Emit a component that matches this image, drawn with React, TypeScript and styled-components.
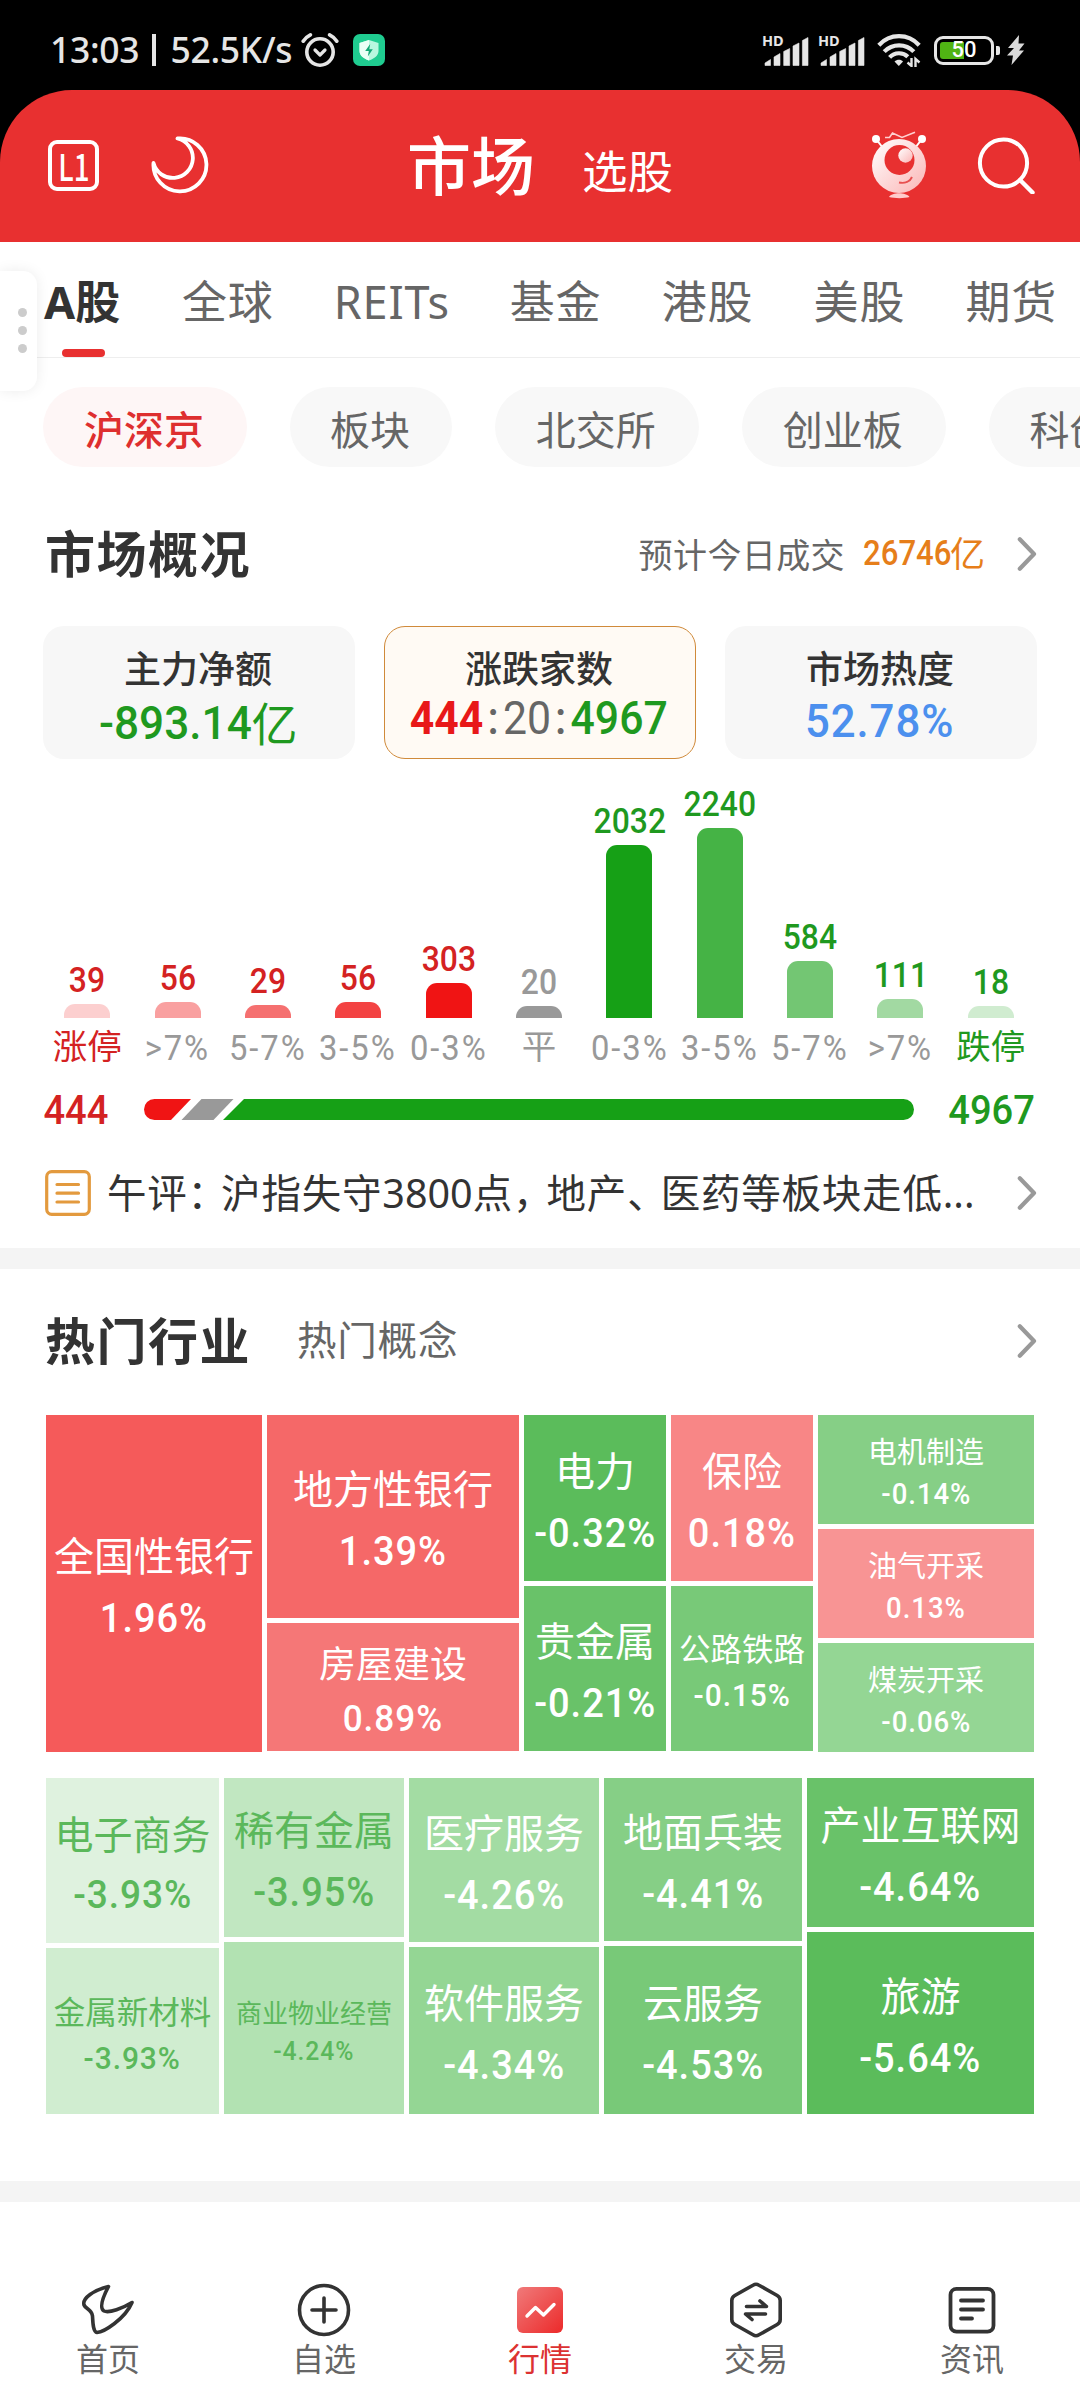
import React from "react";
import styled, {createGlobalStyle, ThemeProvider} from "styled-components";

const theme = {
    colors: {
        primary: "#333333",
        secondary: "#666666",
        muted: "#999999",
        brand: "#e83030",
        up: "#d42222",
        upStrong: "#f01414",
        down: "#1f991f",
        downStrong: "#16a016",
        orange: "#e67e1a",
        divider: "#f4f4f4",
    },
};

const cjk = `"Noto Sans CJK SC", sans-serif`;
const latin = `"Noto Sans", "Noto Sans CJK SC", sans-serif`;
const digits = `Roboto, "Noto Sans CJK SC", sans-serif`;

const bars = [
    {value: "39", label: "涨停", height: 14, color: "#fccfcf", tone: "up"},
    {value: "56", label: ">7%", height: 16, color: "#f9a0a0", tone: "up"},
    {value: "29", label: "5-7%", height: 13, color: "#f57070", tone: "up"},
    {value: "56", label: "3-5%", height: 16, color: "#f34343", tone: "up"},
    {value: "303", label: "0-3%", height: 35, color: "#f01414", tone: "up"},
    {value: "20", label: "平", height: 12, color: "#999999", tone: "muted"},
    {value: "2032", label: "0-3%", height: 173, color: "#16a016", tone: "down"},
    {value: "2240", label: "3-5%", height: 190, color: "#45b345", tone: "down"},
    {value: "584", label: "5-7%", height: 57, color: "#73c673", tone: "down"},
    {value: "111", label: ">7%", height: 19, color: "#a2d9a2", tone: "down"},
    {value: "18", label: "跌停", height: 12, color: "#d0ecd0", tone: "down"},
];

type Cell = { name: string; pct: string; h: number; bg: string; size?: number; green?: boolean };
type Column = { w: number; cells: Cell[] };

const risers: Column[] = [
    {w: 216, cells: [{name: "全国性银行", pct: "1.96%", h: 337, bg: "#f55a5a"}]},
    {
        w: 252, cells: [
            {name: "地方性银行", pct: "1.39%", h: 203, bg: "#f56868"},
            {name: "房屋建设", pct: "0.89%", h: 128, bg: "#f57777", size: 37},
        ]
    },
    {
        w: 142, cells: [
            {name: "电力", pct: "-0.32%", h: 166, bg: "#5bbc5b"},
            {name: "贵金属", pct: "-0.21%", h: 165, bg: "#69c269"},
        ]
    },
    {
        w: 142, cells: [
            {name: "保险", pct: "0.18%", h: 166, bg: "#f88686"},
            {name: "公路铁路", pct: "-0.15%", h: 165, bg: "#78c978", size: 31.5},
        ]
    },
    {
        w: 216, cells: [
            {name: "电机制造", pct: "-0.14%", h: 109, bg: "#86cf86", size: 29},
            {name: "油气开采", pct: "0.13%", h: 109, bg: "#f89494", size: 29},
            {name: "煤炭开采", pct: "-0.06%", h: 109, bg: "#94d694", size: 29},
        ]
    },
];

const fallers: Column[] = [
    {
        w: 173, cells: [
            {name: "电子商务", pct: "-3.93%", h: 165, bg: "#dff2df", size: 39, green: true},
            {name: "金属新材料", pct: "-3.93%", h: 166, bg: "#d0edd0", size: 31.5, green: true},
        ]
    },
    {
        w: 180, cells: [
            {name: "稀有金属", pct: "-3.95%", h: 159, bg: "#c1e7c1", green: true},
            {name: "商业物业经营", pct: "-4.24%", h: 172, bg: "#b2e2b2", size: 26, green: true},
        ]
    },
    {
        w: 190, cells: [
            {name: "医疗服务", pct: "-4.26%", h: 164, bg: "#a3dca3"},
            {name: "软件服务", pct: "-4.34%", h: 167, bg: "#94d694"},
        ]
    },
    {
        w: 198, cells: [
            {name: "地面兵装", pct: "-4.41%", h: 163, bg: "#86cf86"},
            {name: "云服务", pct: "-4.53%", h: 168, bg: "#78c978"},
        ]
    },
    {
        w: 227, cells: [
            {name: "产业互联网", pct: "-4.64%", h: 149, bg: "#69c269"},
            {name: "旅游", pct: "-5.64%", h: 182, bg: "#5bbc5b"},
        ]
    },
];

const AlarmIcon = () => (
    <svg width="38" height="35" viewBox="0 0 38 35" fill="none" stroke="#e6e6e6" strokeLinecap="round">
        <circle cx="19" cy="19" r="13.2" strokeWidth="3.6"/>
        <path d="M14 17l5 5 5-5" strokeWidth="3.2" strokeLinejoin="round"/>
        <path d="M2.200 8.200C4 5.400 6.400 3.400 9.400 1.900M35.800 8.200C34 5.400 31.600 3.400 28.600 1.900" strokeWidth="3.6"/>
    </svg>
);

const ShieldIcon = () => (
    <svg width="32" height="32" viewBox="0 0 32 32">
        <rect width="32" height="32" rx="7" fill="#1fcc90"/>
        <path d="M16 6l9.500 3v8c0 4.500-4 7.500-9.500 9.500C10.500 24.500 6.500 21.500 6.500 17V9z" fill="#b9f7df"/>
        <path d="M16 6v20.500C10.500 24.500 6.500 21.500 6.500 17V9z" fill="#eafff7"/>
        <path d="M17.200 10l-5 7h3.600l-1 5.500 5-7.300h-3.500z" fill="#12a876"/>
    </svg>
);

const SignalIcon = () => (
    <Signal>
        <span>HD</span>
        <svg width="45" height="30" viewBox="0 0 45 30" fill="#e6e6e6">
            <path d="M1 29.500V27l5.500-3.500v6zM10 29.500V21L16 17.500v12zM19.700 29.500V15.500l6-3v17zM29 29.500V10l6-3v22.500zM38.400 29.500V4.500l5.600-3v28z"
                  stroke="#e6e6e6" strokeLinejoin="round" strokeWidth=".6"/>
        </svg>
    </Signal>
);

const WifiIcon = () => (
    <svg width="44" height="34" viewBox="0 0 44 34" fill="none" stroke="#e6e6e6" strokeWidth="4.200">
        <path d="M1.800 12.200C13 .2 31 .2 42.200 12.200M7.200 18.600c8.200-8.400 21.600-8.400 29.600 0M12.600 24.400c5-5.400 13.400-5.400 18.200-.6"/>
        <path d="M17.500 28.500c2.500-2.500 6.500-2.500 8.500 0L21.800 33z" fill="#e6e6e6" stroke="none"/>
        <path d="M34.500 25v8l-4-3.500M38.500 34v-8l4 3.500" strokeWidth="2.400"/>
    </svg>
);

const BoltIcon = () => (
    <svg width="18" height="30" viewBox="0 0 18 30" fill="#d9d9d9">
        <path d="M12 0L1 13h6L0 20.500h6L4.500 30 17 15.500h-5L17.500 8.500h-6z"/>
    </svg>
);

const MoonIcon = () => (
    <svg width="58" height="58" viewBox="0 0 58 58" fill="none" stroke="#fff" strokeWidth="3.800" strokeLinejoin="round">
        <path d="M26.500 2.500A26.500 26.500 0 1 1 2.500 27A20 20 0 1 0 26.500 2.500z"/>
    </svg>
);

const MascotIcon = () => (
    <svg width="56" height="68" viewBox="0 0 56 68">
        <defs>
            <linearGradient id="head" x1="0" y1="0" x2="1" y2="1">
                <stop offset="0" stopColor="#fff"/>
                <stop offset="1" stopColor="#fbb5b5"/>
            </linearGradient>
        </defs>
        <path d="M5 8l7 9M51 8l-7 9" stroke="#fff" strokeWidth="2"/>
        <circle cx="5" cy="8" r="4" fill="#fff"/>
        <circle cx="51" cy="8" r="4" fill="#fff"/>
        <path d="M14 6.500h4.500l3-4.500 9.500 4.500L44 1.200" fill="none" stroke="#ffd0d0" strokeWidth="1.600"/>
        <circle cx="28" cy="35" r="27" fill="url(#head)"/>
        <circle cx="28.500" cy="29" r="15" fill="#e83030"/>
        <circle cx="34.500" cy="24.500" r="7.200" fill="url(#head)"/>
        <path d="M28 51.500c6 1.200 11-1 13-5.500" fill="none" stroke="#e85050" strokeWidth="2"/>
        <path d="M18 66c3-5 17-5 20.500 0-5 1.500-15 1.500-20.500 0z" fill="#fcc"/>
    </svg>
);

const SearchIcon = () => (
    <svg width="58" height="58" viewBox="0 0 58 58" fill="none" stroke="#fff" strokeWidth="4" strokeLinecap="round">
        <circle cx="26.500" cy="27" r="23.600"/>
        <path d="M43 44l12.500 12.500" strokeWidth="4.400"/>
    </svg>
);

const Chevron = () => (
    <svg width="20" height="36" viewBox="0 0 20 36" fill="none" stroke="#999" strokeWidth="4.200"
         strokeLinecap="round" strokeLinejoin="round">
        <path d="M2.800 3.300L17 18 2.800 32.700"/>
    </svg>
);

const NewsIcon = () => (
    <svg width="46" height="46" viewBox="0 0 46 46" fill="none" stroke="#e39a3e" strokeWidth="3.200" strokeLinecap="round">
        <rect x="1.700" y="1.700" width="42.600" height="42.600" rx="5"/>
        <path d="M12 14.500h21.500M12 23.200h21.500M12 32h21.500"/>
    </svg>
);

const HomeIcon = () => (
    <svg width="58" height="58" viewBox="0 0 58 58" fill="none" stroke="#333" strokeWidth="3.600" strokeLinejoin="round">
        <path d="M29.500 6.500C15 10 3 18 5 25c1.500 4 8 4.500 8.500 11 .3 6 .5 16 4.500 16.500C25 52 46 39 53 22.500 44 28 30 33.500 25 31c-5-3-1-14 4.500-24.500z"/>
    </svg>
);

const PlusIcon = () => (
    <svg width="58" height="58" viewBox="0 0 58 58" fill="none" stroke="#333" strokeWidth="3.600" strokeLinecap="round">
        <circle cx="29" cy="30" r="24.500"/>
        <path d="M29 18v24M17 30h24"/>
    </svg>
);

const QuotesIcon = () => (
    <svg width="58" height="58" viewBox="0 0 58 58" fill="none">
        <defs>
            <linearGradient id="quotes" x1="0" y1="0" x2="1" y2="1">
                <stop offset="0" stopColor="#f07a7a"/>
                <stop offset="1" stopColor="#ec2a2a"/>
            </linearGradient>
        </defs>
        <rect x="6" y="7" width="46" height="46" rx="6" fill="url(#quotes)"/>
        <path d="M16 36l8.500-8.500 8 7.500L43 24.500" stroke="#fff" strokeWidth="3.400" strokeLinecap="round"
              strokeLinejoin="round"/>
    </svg>
);

const TradeIcon = () => (
    <svg width="58" height="58" viewBox="0 0 58 58" fill="none" stroke="#333" strokeWidth="3.600"
         strokeLinecap="round" strokeLinejoin="round">
        <path d="M26 5.200q3-1.800 6 0L50.200 15.500q3 1.700 3 5v19q0 3.300-3 5L32 54.800q-3 1.800-6 0L7.800 44.500q-3-1.700-3-5v-19q0-3.300 3-5z"/>
        <path d="M19.500 26.500h20L33 21M38.500 34h-20L25 39.500"/>
    </svg>
);

const InfoIcon = () => (
    <svg width="58" height="58" viewBox="0 0 58 58" fill="none" stroke="#333" strokeWidth="3.800" strokeLinecap="round">
        <rect x="7.500" y="8.800" width="43" height="42.800" rx="6"/>
        <path d="M18 20.500h22M18 29.500h22M18 38.500h11"/>
    </svg>
);

const HeatMap = ({columns}: { columns: Column[] }) => (
    <HeatGrid>
        {columns.map((column, i) => (
            <HeatColumn key={i} $w={column.w}>
                {column.cells.map((cell) => (
                    <HeatCell key={cell.name} $h={cell.h} $bg={cell.bg} $size={cell.size ?? 40} $green={cell.green}>
                        <span>{cell.name}</span>
                        <Num $scale={0.95} $track={1}>{cell.pct}</Num>
                    </HeatCell>
                ))}
            </HeatColumn>
        ))}
    </HeatGrid>
);

const App = () => {
    return (
        <ThemeProvider theme={theme}>
            <GlobalStyle/>
            <Screen>
                <StatusBar>
                    <Clock>13:03 <i/> 52.5K/s</Clock>
                    <AlarmIcon/>
                    <ShieldWrap><ShieldIcon/></ShieldWrap>
                    <StatusRight>
                        <SignalIcon/>
                        <SignalIcon/>
                        <WifiIcon/>
                        <Battery><span>50</span></Battery>
                        <BoltIcon/>
                    </StatusRight>
                </StatusBar>
                <HeaderBack>
                    <Header>
                        <LevelBadge><span>L1</span></LevelBadge>
                        <MoonIcon/>
                        <HeaderTitle>市场</HeaderTitle>
                        <HeaderSub>选股</HeaderSub>
                        <HeaderTools>
                            <MascotIcon/>
                            <SearchIcon/>
                        </HeaderTools>
                    </Header>
                </HeaderBack>

                <Tabs>
                    <Tab $w={78} $active>A股</Tab>
                    <Tab $w={92}>全球</Tab>
                    <Tab $w={114}>REITs</Tab>
                    <Tab $w={92}>基金</Tab>
                    <Tab $w={92}>港股</Tab>
                    <Tab $w={92}>美股</Tab>
                    <Tab $w={92}>期货</Tab>
                    <SideHandle><i/><i/><i/></SideHandle>
                </Tabs>

                <Pills>
                    <Pill $w={204} $active>沪深京</Pill>
                    <Pill $w={162}>板块</Pill>
                    <Pill $w={204}>北交所</Pill>
                    <Pill $w={204}>创业板</Pill>
                    <Pill $w={204}>科创板</Pill>
                </Pills>

                <SectionHead $h={174}>
                    <h2>市场概况</h2>
                    <Forecast>预计今日成交</Forecast>
                    <Turnover><Num $scale={0.89} $w={87}>26746</Num><Unit>亿</Unit></Turnover>
                    <Chevron/>
                </SectionHead>

                <Cards>
                    <Card>
                        <h3>主力净额</h3>
                        <CardValue $color={theme.colors.down} $shift={3}>
                            <Num $scale={0.96} $w={153}>-893.14</Num><Unit>亿</Unit>
                        </CardValue>
                    </Card>
                    <Card $active>
                        <h3>涨跌家数</h3>
                        <CardValue $color={theme.colors.secondary} $shift={-2}>
                            <Num $scale={0.93}><Up>444</Up><Colon>:</Colon><Flat>20</Flat><Colon>:</Colon><Down>4967</Down></Num>
                        </CardValue>
                    </Card>
                    <Card>
                        <h3>市场热度</h3>
                        <CardValue $color="#4c90ee" $shift={1}>
                            <Num $scale={0.95} $track={1}>52.78%</Num>
                        </CardValue>
                    </Card>
                </Cards>

                <Chart>
                    {bars.map((bar, i) => (
                        <ChartColumn key={i} $tone={bar.tone}>
                            <Num $scale={0.91}>{bar.value}</Num>
                            <Bar style={{height: bar.height}} $color={bar.color}/>
                        </ChartColumn>
                    ))}
                </Chart>
                <ChartLabels>
                    {bars.map((bar, i) => (
                        <ChartLabel key={i} $edge={i === 0 ? "up" : i === bars.length - 1 ? "down" : undefined}>
                            {bar.label.includes("%") ? <Num $scale={0.95} $track={2}>{bar.label}</Num> :
                                <Unit>{bar.label}</Unit>}
                        </ChartLabel>
                    ))}
                </ChartLabels>

                <Ratio>
                    <RatioNum $tone="up"><Num $scale={0.93}>444</Num></RatioNum>
                    <svg width="770" height="21" viewBox="0 0 770 21">
                        <path d="M10.500 0H47L27 21H10.500a10.500 10.500 0 0 1 0-21z" fill="#f01414"/>
                        <path d="M57.500 0H89.500L69.500 21H37.500z" fill="#999"/>
                        <path d="M100 0H759.500a10.500 10.500 0 0 1 0 21H79z" fill="#16a016"/>
                    </svg>
                    <RatioNum $tone="down"><Num $scale={0.93}>4967</Num></RatioNum>
                </Ratio>

                <News>
                    <NewsIcon/>
                    <p>午评<Punct>：</Punct>沪指失守<b>3800</b>点<Punct>，</Punct>地产<Punct>、</Punct>医药等板块走低<b>...</b></p>
                    <Chevron/>
                </News>
                <Divider/>

                <SectionHead $h={146} $lift={2}>
                    <h2>热门行业</h2>
                    <SubTitle>热门概念</SubTitle>
                    <Chevron/>
                </SectionHead>
                <HeatMap columns={risers}/>
                <HeatMap columns={fallers}/>
                <Spacer/>
                <Divider/>

                <BottomNav>
                    <NavItem><HomeIcon/>首页</NavItem>
                    <NavItem><PlusIcon/>自选</NavItem>
                    <NavItem $active><QuotesIcon/>行情</NavItem>
                    <NavItem><TradeIcon/>交易</NavItem>
                    <NavItem><InfoIcon/>资讯</NavItem>
                </BottomNav>
            </Screen>
        </ThemeProvider>
    );
};

const GlobalStyle = createGlobalStyle`
    * {
        box-sizing: border-box;
        margin: 0;
        padding: 0;
    }

    body {
        background: #fff;
        font-family: ${cjk};
        color: ${theme.colors.primary};
    }

    svg {
        display: block;
        flex-shrink: 0;
    }
`

const Screen = styled.div`
    width: 1080px;
    height: 2400px;
    overflow: hidden;
    display: flex;
    flex-direction: column;
    background: #fff;
    white-space: nowrap;

    > * {
        flex-shrink: 0;
    }
`

const Num = styled.span<{ $scale: number; $w?: number; $track?: number }>`
    display: inline-block;
    font-family: ${digits};
    font-weight: 500;
    letter-spacing: ${({$track}) => $track ?? 0}px;
    width: ${({$w}) => $w ? `${$w}px` : "auto"};
    transform: scaleX(${({$scale}) => $scale});
    transform-origin: ${({$w}) => $w ? "left" : "center"};
`

const Unit = styled.span`
    display: inline-block;
    margin-top: -4px;
`

const StatusBar = styled.div`
    height: 90px;
    padding: 10px 55px 0 50px;
    display: flex;
    align-items: center;
    background: #000;
`

const Clock = styled.div`
    display: flex;
    align-items: center;
    width: 251px;
    font: 500 35.500px/1 ${latin};
    letter-spacing: -0.3px;
    color: #e6e6e6;

    i {
        width: 4px;
        height: 32px;
        margin: 0 14px 0 13px;
        background: #e6e6e6;
    }
`

const ShieldWrap = styled.div`
    margin-left: 14px;
`

const StatusRight = styled.div`
    display: flex;
    align-items: center;
    margin-left: auto;

    > svg:first-of-type {
        margin-left: 12px;
    }
`

const Signal = styled.div`
    position: relative;
    height: 32px;
    margin-left: 9px;
    padding: 2px 0 0 2px;

    span {
        position: absolute;
        left: 0;
        top: -4px;
        font: 700 14.500px/20px "Noto Sans", sans-serif;
        color: #e6e6e6;
    }
`

const Battery = styled.div`
    position: relative;
    width: 60px;
    height: 29px;
    margin: 0 13px 0 13px;
    display: flex;
    align-items: center;
    justify-content: center;
    border: 3px solid #e6e6e6;
    border-radius: 9px;
    background: linear-gradient(90deg, #50b414 50%, #000 50%) content-box;
    padding: 3px;

    span {
        font: 500 22px/1 Roboto, sans-serif;
        color: #fff;
    }

    &::after {
        content: "";
        position: absolute;
        right: -9px;
        top: 7px;
        width: 4px;
        height: 9px;
        border-radius: 0 2px 2px 0;
        background: #e6e6e6;
    }
`

const HeaderBack = styled.div`
    background: #000;
`

const Header = styled.header`
    height: 152px;
    padding: 0 45px 2px 48px;
    display: flex;
    align-items: center;
    background: ${theme.colors.brand};
    border-radius: 72px 72px 0 0;
    color: #fff;
`

const LevelBadge = styled.div`
    width: 51px;
    height: 51px;
    margin-right: 52px;
    display: flex;
    align-items: center;
    justify-content: center;
    border: 4px solid #fff;
    border-radius: 9px;

    span {
        font: 500 37px/1 ${cjk};
        transform: scaleX(0.75);
    }
`

const HeaderTitle = styled.div`
    margin-left: 198px;
    font-size: 64px;
    line-height: 90px;
    font-weight: 500;
    margin-top: -7px;
`

const HeaderSub = styled.div`
    margin: 8px 0 0 47px;
    font-size: 45.500px;
    line-height: 60px;
`

const HeaderTools = styled.div`
    display: flex;
    align-items: center;
    gap: 50px;
    margin-left: auto;
`

const Tabs = styled.nav`
    position: relative;
    height: 116px;
    padding: 0 0 0 44px;
    display: flex;
    gap: 59.900px;
    border-bottom: 1px solid #eee;
`

const Tab = styled.div<{ $w: number; $active?: boolean }>`
    position: relative;
    flex: 0 0 ${({$w}) => $w}px;
    padding-top: 30px;
    font: ${({$active}) => $active ? 700 : 400} 45px/60px ${latin};
    letter-spacing: ${({$active}) => $active ? 0 : 0.8}px;
    color: ${({$active}) => $active ? theme.colors.primary : theme.colors.secondary};

    &::after {
        content: "";
        display: ${({$active}) => $active ? "block" : "none"};
        position: absolute;
        left: 18px;
        bottom: 0;
        width: 43px;
        height: 8px;
        border-radius: 4px;
        background: ${theme.colors.brand};
    }
`

const SideHandle = styled.div`
    position: absolute;
    left: 0;
    top: 29px;
    width: 37px;
    height: 120px;
    display: flex;
    flex-direction: column;
    align-items: center;
    justify-content: center;
    gap: 9px;
    padding-left: 8px;
    padding-bottom: 2px;
    background: #fff;
    border-radius: 0 14px 14px 0;
    box-shadow: 0 0 14px rgba(0, 0, 0, 0.08);

    i {
        width: 9px;
        height: 9px;
        border-radius: 50%;
        background: #ccc;
    }
`

const Pills = styled.div`
    display: flex;
    gap: 42.900px;
    padding: 29px 0 0 43px;
    width: 1080px;
    overflow: hidden;
`

const Pill = styled.div<{ $w: number; $active?: boolean }>`
    flex: 0 0 ${({$w}) => $w}px;
    height: 80px;
    padding: 1px 2px 0 0;
    border-radius: 40px;
    text-align: center;
    font-size: 40px;
    line-height: 80px;
    font-weight: ${({$active}) => $active ? 500 : 400};
    color: ${({$active}) => $active ? "#de2f2f" : theme.colors.secondary};
    background: ${({$active}) => $active ? "#fef6f6" : "#f8f8f8"};
`

const SectionHead = styled.div<{ $h: number; $lift?: number }>`
    height: ${({$h}) => $h}px;
    padding: 0 43px ${({$lift}) => $lift ?? 0}px 45px;
    display: flex;
    align-items: center;

    h2 {
        font-size: 50px;
        line-height: 60px;
        font-weight: 700;
        letter-spacing: 1.5px;
        margin-top: -6px;
    }

    > svg {
        margin-left: auto;
    }
`

const Forecast = styled.div`
    margin-left: auto;
    font-size: 34px;
    line-height: 48px;
    letter-spacing: 0.4px;
    color: ${theme.colors.secondary};
`

const Turnover = styled.div`
    display: flex;
    align-items: center;
    margin: 0 -90px 0 18px;
    font-size: 35px;
    line-height: 48px;
    color: ${theme.colors.orange};

    && + svg {
        margin-left: 122px;
    }
`

const SubTitle = styled.div`
    margin: -6px 0 0 46px;
    font-size: 39.500px;
    line-height: 56px;
    letter-spacing: 0.8px;
    color: ${theme.colors.secondary};
`

const Cards = styled.div`
    display: grid;
    grid-template-columns: repeat(3, 1fr);
    gap: 29px;
    padding: 0 43px;
    margin-top: -15px;
`

const Card = styled.div<{ $active?: boolean }>`
    height: 133px;
    padding-right: 2px;
    display: flex;
    flex-direction: column;
    align-items: center;
    border-radius: 21px;
    border: 1.500px solid ${({$active}) => $active ? "#d08a3a" : "transparent"};
    background: ${({$active}) => $active ? "#fffaf4" : "#f7f7f7"};

    h3 {
        margin-top: 14px;
        font-size: 37px;
        line-height: 52px;
        font-weight: 500;
    }
`

const CardValue = styled.div<{ $color: string; $shift: number }>`
    display: flex;
    align-items: center;
    margin-top: ${({$shift}) => $shift - 1}px;
    height: 56px;
    font-size: 46px;
    line-height: 56px;
    color: ${({$color}) => $color};
`

const Up = styled.b`
    font-weight: 700;
    color: #e81818;
`

const Colon = styled.span`
    display: inline-block;
    width: 21px;
    text-align: center;
`

const Flat = styled.span`
    font-weight: 400;
`

const Down = styled.b`
    font-weight: 500;
    color: ${theme.colors.down};
`

const Chart = styled.div`
    height: 259px;
    padding: 0 44px 0 42px;
    display: grid;
    grid-template-columns: repeat(11, 1fr);
`

const ChartColumn = styled.div<{ $tone: string }>`
    display: flex;
    flex-direction: column;
    align-items: center;
    justify-content: flex-end;
    font-size: 35px;
    line-height: 35px;
    color: ${({$tone}) => $tone === "up" ? theme.colors.up : $tone === "down" ? theme.colors.down : theme.colors.muted};
`

const Bar = styled.div<{ $color: string }>`
    width: 46px;
    margin-top: 6px;
    border-radius: 11px 11px 0 0;
    background: ${({$color}) => $color};
`

const ChartLabels = styled.div`
    height: 60px;
    padding: 0 44px 0 42px;
    display: grid;
    grid-template-columns: repeat(11, 1fr);
`

const ChartLabel = styled.div<{ $edge?: string }>`
    display: flex;
    justify-content: center;
    font-size: 34.500px;
    line-height: 60px;
    color: ${({$edge}) => $edge === "up" ? theme.colors.up : $edge === "down" ? theme.colors.down : theme.colors.muted};

    ${Num} {
        font-weight: 400;
    }
`

const Ratio = styled.div`
    height: 63px;
    padding: 0 45px 0 42px;
    display: flex;
    align-items: center;
    justify-content: space-between;
`

const RatioNum = styled.div<{ $tone: string }>`
    width: ${({$tone}) => $tone === "up" ? 67 : 86}px;
    display: flex;
    justify-content: center;
    font-size: 41px;
    line-height: 50px;
    color: ${({$tone}) => $tone === "up" ? theme.colors.up : theme.colors.down};
`

const News = styled.div`
    height: 107px;
    padding: 0 43px 3px 45px;
    display: flex;
    align-items: center;

    p {
        margin-left: 16px;
        margin-top: -2px;
        font-size: 39.500px;
        line-height: 56px;
        letter-spacing: 0.8px;
    }

    b {
        font-family: "Noto Sans", sans-serif;
        font-weight: 400;
        letter-spacing: 0;
    }

    svg:last-child {
        margin-left: auto;
    }
`

const Punct = styled.span`
    letter-spacing: -6px;
`

const Divider = styled.div`
    height: 21px;
    background: ${theme.colors.divider};
`

const HeatGrid = styled.div`
    display: flex;
    gap: 5px;
    height: 337px;
    margin: 0 0 26px 46px;
`

const HeatColumn = styled.div<{ $w: number }>`
    width: ${({$w}) => $w}px;
    display: flex;
    flex-direction: column;
    gap: 5px;
`

const HeatCell = styled.div<{ $h: number; $bg: string; $size: number; $green?: boolean }>`
    height: ${({$h}) => $h}px;
    padding-top: 7px;
    display: flex;
    flex-direction: column;
    align-items: center;
    justify-content: center;
    font-size: ${({$size}) => $size}px;
    line-height: ${({$size}) => $size >= 39 ? 1.62 : 1.51};
    color: ${({$green}) => $green ? "#5bb85b" : "#fff"};
    background: ${({$bg}) => $bg};
`

const Spacer = styled.div`
    height: 40px;
`

const BottomNav = styled.nav`
    flex: 1;
    padding-top: 78px;
    display: grid;
    grid-template-columns: repeat(5, 1fr);
`

const NavItem = styled.div<{ $active?: boolean }>`
    display: flex;
    flex-direction: column;
    align-items: center;
    font-size: 32px;
    line-height: 38px;
    color: ${({$active}) => $active ? "#dc3232" : theme.colors.secondary};
`

export default App;
